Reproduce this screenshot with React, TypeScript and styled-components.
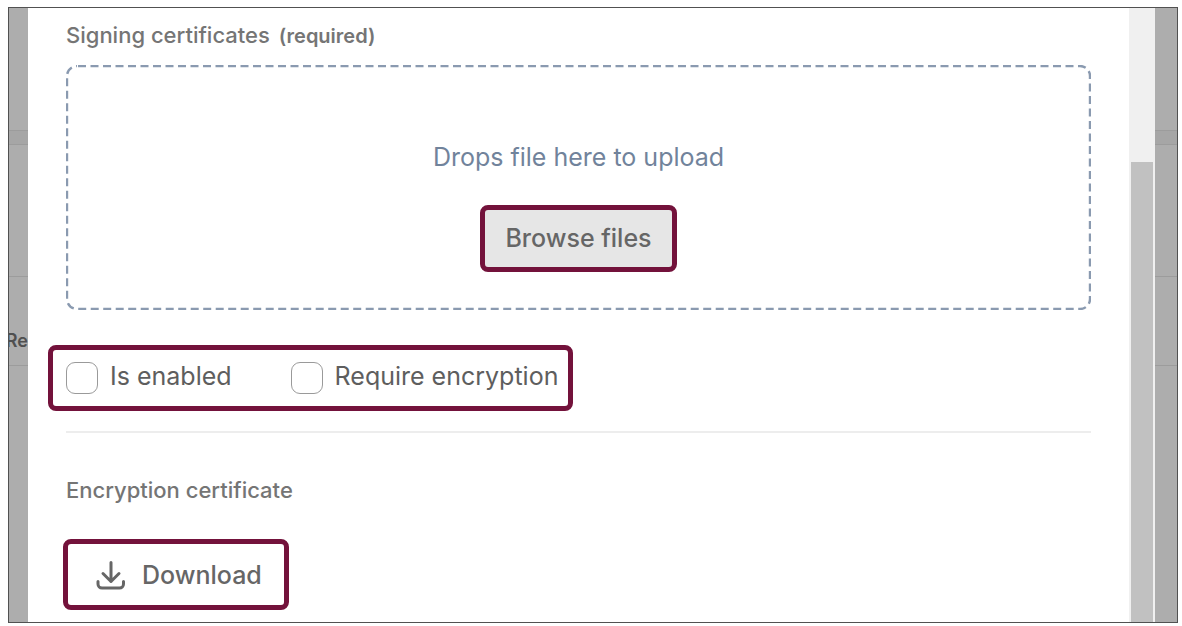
import React from "react";
import styled, { createGlobalStyle } from "styled-components";

const accent = "#73123b";

const GlobalStyle = createGlobalStyle`
  *, *::before, *::after { box-sizing: border-box; }
  body {
    margin: 0;
    background: #fff;
    color: #666;
    font-family: Inter, "Liberation Sans", sans-serif;
    font-size: 25px;
    line-height: 32px;
  }
`;

const Page = styled.div`
  display: flex;
  min-height: 100vh;
  padding: 7px 4px 3px 8px;
`;

const Frame = styled.div`
  display: flex;
  flex: 1;
  border: 1px solid #515151;
  background: #adadad;
`;

const Backdrop = styled.div<{ $width: number }>`
  display: flex;
  flex: none;
  flex-direction: column;
  width: ${(p) => p.$width}px;
  overflow: hidden;
`;

const BackdropRow = styled.div<{ $height: number; $shaded?: boolean }>`
  display: flex;
  flex: none;
  align-items: flex-end;
  justify-content: flex-end;
  height: ${(p) => p.$height}px;
  padding-bottom: 8px;
  border-bottom: 1px solid #9c9c9c;
  background: ${(p) => (p.$shaded ? "#a6a6a6" : "transparent")};
  color: #505050;
  font-size: 18px;
  font-weight: 600;
`;

const Dialog = styled.main`
  flex: 1;
  min-width: 0;
  padding: 11px 38px 12px;
  background: #fff;
`;

const Title = styled.h2`
  display: flex;
  align-items: baseline;
  gap: 9px;
  margin: 0;
  color: #757575;
  font-size: 22px;
  font-weight: 500;
`;

const Required = styled.span`
  font-size: 20px;
  font-weight: 600;
`;

const DropZone = styled.section`
  position: relative;
  display: flex;
  flex-direction: column;
  align-items: center;
  gap: 32px;
  margin-top: 13px;
  padding: 76px 20px 38px;
`;

const DashedOutline = styled.svg`
  position: absolute;
  inset: 0;
  width: 100%;
  height: 100%;
  pointer-events: none;

  rect {
    width: calc(100% - 2px);
    height: calc(100% - 2px);
  }
`;

const DropHint = styled.p`
  margin: 0;
  color: #71839b;
`;

const ActionButton = styled.button<{ $filled?: boolean }>`
  display: inline-flex;
  align-items: center;
  gap: 16px;
  padding: ${(p) => (p.$filled ? "12px 20px 13px" : "15px 22px 14px 28px")};
  border: 5px solid ${accent};
  border-radius: 8px;
  background: ${(p) => (p.$filled ? "#e6e6e6" : "#fff")};
  color: #666;
  font: inherit;
  font-weight: 500;
  cursor: pointer;
`;

const Options = styled.div`
  display: flex;
  width: fit-content;
  gap: 59px;
  margin: 35px 0 20px -18px;
  padding: 12px 10px 12px 13px;
  border: 5px solid ${accent};
  border-radius: 8px;
`;

const Option = styled.label`
  display: flex;
  align-items: flex-start;
  gap: 12px;
  color: #5e5e5e;
  line-height: 28px;
`;

const Checkbox = styled.input`
  appearance: none;
  width: 32px;
  height: 32px;
  margin: 0;
  border: 1px solid #9a9a9a;
  border-radius: 9px;
  background: #fff;
  &:checked { background: ${accent}; }
`;

const Divider = styled.hr`
  height: 2px;
  margin: 0 0 41px;
  border: 0;
  background: #ededed;
`;

const DownloadRow = styled.div`
  display: flex;
  margin: 33px 0 0 -3px;
`;

const ScrollTrack = styled.div`
  display: flex;
  flex: none;
  width: 26px;
  padding: 154px 2px 0;
  background: #f0f0f0;
`;

const ScrollThumb = styled.div`
  flex: 1;
  background: #c1c1c1;
`;

function DownloadIcon() {
  return (
    <svg width="30" height="30" viewBox="0 0 30 30" fill="none" stroke="currentColor" strokeWidth="3" strokeLinecap="round" strokeLinejoin="round" aria-hidden="true">
      <path d="M15 2.5V21.500M7 13.500 15 21.500l8-8M2 21.500v2.500a4 4 0 0 0 4 4h17.500a4 4 0 0 0 4-4v-2.500" />
    </svg>
  );
}

export default function App() {
  return (
    <>
      <GlobalStyle />
      <Page>
        <Frame>
          <Backdrop $width={19}>
            <BackdropRow $height={123} />
            <BackdropRow $height={14} $shaded />
            <BackdropRow $height={132} />
            <BackdropRow $height={89}>Re</BackdropRow>
          </Backdrop>
          <Dialog>
            <Title>
              Signing certificates <Required>(required)</Required>
            </Title>
            <DropZone>
              <DashedOutline aria-hidden="true">
                <rect
                  x="1"
                  y="1"
                  rx="10"
                  fill="none"
                  stroke="#8a9ab0"
                  strokeWidth="2.4"
                  strokeDasharray="8 4.5"
                  strokeDashoffset="-1"
                />
              </DashedOutline>
              <DropHint>Drops file here to upload</DropHint>
              <ActionButton type="button" $filled>Browse files</ActionButton>
            </DropZone>
            <Options>
              <Option>
                <Checkbox type="checkbox" /> Is enabled
              </Option>
              <Option>
                <Checkbox type="checkbox" /> Require encryption
              </Option>
            </Options>
            <Divider />
            <Title>Encryption certificate</Title>
            <DownloadRow>
              <ActionButton type="button">
                <DownloadIcon />
                Download
              </ActionButton>
            </DownloadRow>
          </Dialog>
          <ScrollTrack>
            <ScrollThumb />
          </ScrollTrack>
          <Backdrop $width={22}>
            <BackdropRow $height={123} />
            <BackdropRow $height={14} $shaded />
            <BackdropRow $height={132} />
            <BackdropRow $height={89} />
          </Backdrop>
        </Frame>
      </Page>
    </>
  );
}
